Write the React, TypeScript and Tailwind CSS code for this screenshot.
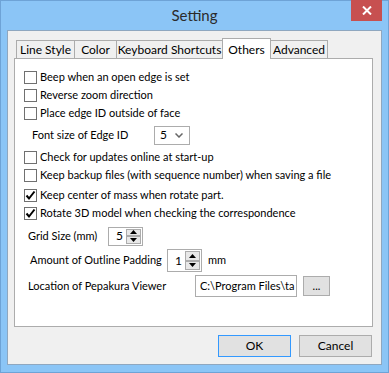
import { ReactNode } from "react";

// Ventana "Setting" estilo Windows 8, pestaña Others activa.
const tabs = [
  { t: "Line Style", w: "w-[59px]" },
  { t: "Color", w: "w-[43px]" },
  { t: "Keyboard Shortcuts", w: "w-[107px]" },
  { t: "Others", w: "w-[49px]" },
  { t: "Advanced", w: "w-[58px]" },
];

function Casilla({ marcada }: { marcada?: boolean }) {
  return (
    <span className="flex h-[13px] w-[13px] shrink-0 items-center justify-center border border-[#707070] bg-white">
      {marcada && (
        <svg width="11" height="11" viewBox="0 0 11 11">
          <path d="M1.5 5.5 L4 8.5 L9.5 1.5" stroke="#000" strokeWidth="2" fill="none" />
        </svg>
      )}
    </span>
  );
}

function Fila({ marcada, children }: { marcada?: boolean; children: ReactNode }) {
  return (
    <div className="flex h-[18px] items-center gap-[3px] whitespace-nowrap pl-[9px]">
      <Casilla marcada={marcada} />
      <span>{children}</span>
    </div>
  );
}

function Flechita({ arriba }: { arriba?: boolean }) {
  return (
    <span className="flex flex-1 items-center justify-center border border-[#acacac] bg-[#e8e8e8]">
      <svg width="7" height="4" viewBox="0 0 7 4">
        <path d={arriba ? "M0 4 L3.5 0 L7 4 Z" : "M0 0 L3.5 4 L7 0 Z"} fill="#000" />
      </svg>
    </span>
  );
}

function Giro({ valor, alto }: { valor: string; alto: string }) {
  return (
    <div className={`flex w-[35px] shrink-0 items-stretch border border-[#acacac] bg-white py-px pr-px ${alto}`}>
      <span className="flex flex-1 items-center pl-[7px] text-[12px]">{valor}</span>
      <div className="flex w-[15px] flex-col">
        <Flechita arriba />
        <Flechita />
      </div>
    </div>
  );
}

export default function App() {
  return (
    <div className="flex h-[373px] w-[389px] flex-col border border-[#6ea3d6] bg-[#8bc5f6] font-['Lato',sans-serif] text-[11px] text-black">
      {/* barra de título */}
      <div className="relative flex h-[29px] shrink-0 items-center justify-center">
        <span className="pb-[1px] text-[15px] text-[#2b2b2b]">Setting</span>
        <div className="absolute right-[6px] top-[-1px] flex h-[21px] w-[31px] items-center justify-center bg-[#c75050]">
          <svg width="10" height="9" viewBox="0 0 10 9">
            <path d="M1 0.5 L9 8.5 M9 0.5 L1 8.5" stroke="#fff" strokeWidth="2" />
          </svg>
        </div>
      </div>

      {/* área cliente */}
      <div className="mx-[6px] flex h-[335px] flex-col border border-[#8fa7bf] bg-[#f0f0f0] pl-[6px] pr-[8px] pt-[7px]">
        <div className="flex items-end whitespace-nowrap pl-[2px] text-[12px]">
          {tabs.map(({ t, w }) =>
            t === "Others" ? (
              <div
                key={t}
                className={`relative z-10 -mb-px -mr-px flex h-[21px] items-start justify-center border border-b-0 border-[#acacac] bg-white pt-[2px] ${w}`}
              >
                {t}
              </div>
            ) : (
              <div
                key={t}
                className={`-mr-px flex h-[18px] items-center justify-center border border-b-0 border-[#acacac] bg-[#f0f0f0] pt-px ${w}`}
              >
                {t}
              </div>
            ),
          )}
        </div>

        <div className="flex h-[269px] w-[359px] flex-col whitespace-nowrap border border-[#acacac] bg-white pt-[9px]">
          <Fila>Beep when an open edge is set</Fila>
          <Fila>Reverse zoom direction</Fila>
          <Fila>Place edge ID outside of face</Fila>
          <div className="flex h-[26px] items-center pl-[17px]">
            <span className="w-[122px] shrink-0">Font size of Edge ID</span>
            <div className="flex h-[19px] w-[36px] items-center justify-between border border-[#acacac] bg-white pl-[5px] pr-[6px] text-[12px]">
              <span>5</span>
              <svg width="8" height="5" viewBox="0 0 8 5">
                <path d="M0.5 0.5 L4 4 L7.5 0.5" stroke="#666" strokeWidth="1.5" fill="none" />
              </svg>
            </div>
          </div>
          <Fila>Check for updates online at start-up</Fila>
          <Fila>Keep backup files (with sequence number) when saving a file</Fila>
          <div className="h-[2px]" />
          <Fila marcada>Keep center of mass when rotate part.</Fila>
          <Fila marcada>Rotate 3D model when checking the correspondence</Fila>

          <div className="mt-[4px] flex h-[20px] items-center pl-[13px]">
            <span className="w-[80px] shrink-0">Grid Size (mm)</span>
            <Giro valor="5" alto="h-[19px]" />
          </div>
          <div className="mt-[3px] flex h-[23px] items-center pl-[15px]">
            <span className="w-[137px] shrink-0">Amount of Outline Padding</span>
            <Giro valor="1" alto="h-[23px]" />
            <span className="ml-[6px]">mm</span>
          </div>
          <div className="mt-[3px] flex h-[22px] items-center pl-[13px]">
            <span className="w-[167px] shrink-0">Location of Pepakura Viewer</span>
            <div className="flex h-[22px] w-[102px] shrink-0 items-center overflow-hidden border border-[#acacac] bg-white pl-[4px] text-[11px]">
              C:\Program Files\ta
            </div>
            <button className="ml-[6px] flex h-[20px] w-[27px] shrink-0 items-center justify-center border border-[#acacac] bg-[#e1e1e1] pt-px">
              ...
            </button>
          </div>
        </div>

        <div className="mt-[8px] flex justify-end gap-[8px] pr-px text-[12px]">
          <button className="h-[22px] w-[73px] border border-[#3399ff] bg-[#e1e1e1]">OK</button>
          <button className="h-[22px] w-[73px] border border-[#acacac] bg-[#e1e1e1]">Cancel</button>
        </div>
      </div>
    </div>
  );
}
